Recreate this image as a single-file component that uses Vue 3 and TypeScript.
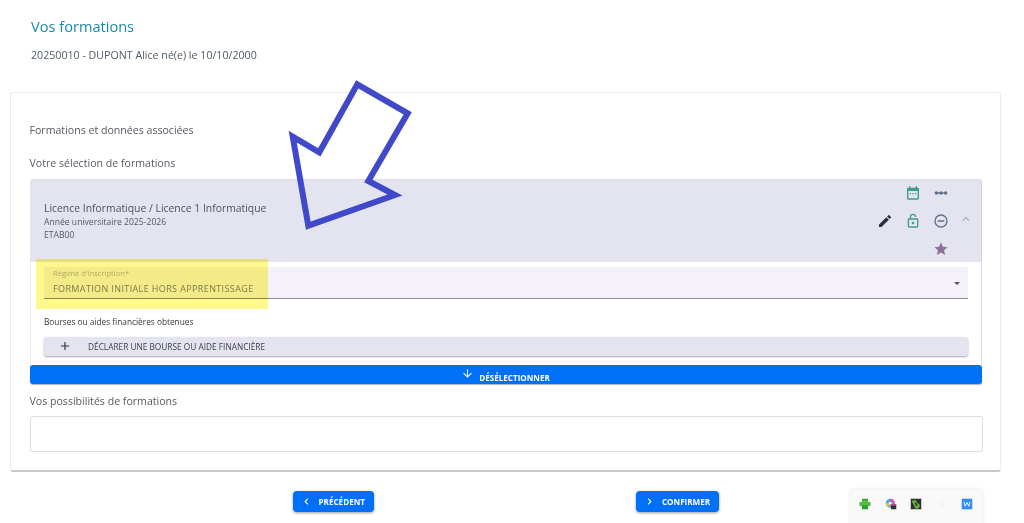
<script setup lang="ts">
const headerText = { title: 'Vos formations', student: '20250010 - DUPONT Alice né(e) le 10/10/2000' }
</script>

<template>
  <div class="page">
    <h1 class="title">{{ headerText.title }}</h1>
    <p class="student">{{ headerText.student }}</p>

    <section class="card">
      <p class="section-first">Formations et données associées</p>
      <p class="section-label">Votre sélection de formations</p>

      <div class="panel">
        <header class="panel-head">
          <div class="panel-info">
            <div class="panel-title">Licence Informatique / Licence 1 Informatique</div>
            <div class="panel-sub">Année universitaire 2025-2026</div>
            <div class="panel-sub">ETAB00</div>
          </div>
          <div class="panel-actions">
            <div class="icon-grid">
              <span></span>
              <svg viewBox="0 0 24 24" class="ic green"><path d="M19 4h-1V2h-2v2H8V2H6v2H5a2 2 0 0 0-2 2v14a2 2 0 0 0 2 2h14a2 2 0 0 0 2-2V6a2 2 0 0 0-2-2zm0 16H5V9h14v11zM7 12h2v2H7zm4 0h2v2h-2zm4 0h2v2h-2z"/></svg>
              <svg viewBox="0 0 24 24" class="ic slate"><circle cx="5" cy="12" r="2.6"/><circle cx="12" cy="12" r="2.6"/><circle cx="19" cy="12" r="2.6"/><rect x="5" y="11" width="14" height="2"/></svg>

              <svg viewBox="0 0 24 24" class="ic dark"><path d="M3 17.25V21h3.75L17.81 9.94l-3.75-3.75L3 17.25zM20.71 7.04a1 1 0 0 0 0-1.41l-2.34-2.34a1 1 0 0 0-1.41 0l-1.83 1.83 3.75 3.75 1.83-1.83z"/></svg>
              <svg viewBox="0 0 24 24" class="ic green"><path d="M12 17a2 2 0 1 0 0-4 2 2 0 0 0 0 4zm6-9h-8.9V6a2.9 2.9 0 0 1 5.8 0h1.9a4.8 4.8 0 0 0-9.6 0v2H6a2 2 0 0 0-2 2v10a2 2 0 0 0 2 2h12a2 2 0 0 0 2-2V10a2 2 0 0 0-2-2zm0 12H6V10h12v10z"/></svg>
              <svg viewBox="0 0 24 24" class="ic slate"><path d="M7 11v2h10v-2H7zm5-9a10 10 0 1 0 0 20 10 10 0 0 0 0-20zm0 18a8 8 0 1 1 0-16 8 8 0 0 1 0 16z"/></svg>

              <span></span>
              <span></span>
              <svg viewBox="0 0 24 24" class="ic mauve"><path d="M12 17.27 18.18 21l-1.64-7.03L22 9.24l-7.19-.61L12 2 9.19 8.63 2 9.24l5.46 4.73L5.82 21z"/></svg>
            </div>
            <svg viewBox="0 0 24 24" class="chevron"><path d="M7.4 15.4 12 10.8l4.6 4.6L18 14l-6-6-6 6z"/></svg>
          </div>
        </header>

        <div class="panel-body">
          <div class="select-field">
            <div class="select-text">
              <div class="select-label">Régime d'inscription*</div>
              <div class="select-value">FORMATION INITIALE HORS APPRENTISSAGE</div>
            </div>
            <span class="caret"></span>
          </div>
          <div class="aid-label">Bourses ou aides financières obtenues</div>
          <button class="aid-btn" type="button">
            <svg viewBox="0 0 24 24" class="plus"><path d="M19 13h-6v6h-2v-6H5v-2h6V5h2v6h6z"/></svg>
            <span>DÉCLARER UNE BOURSE OU AIDE FINANCIÈRE</span>
          </button>
        </div>

        <button class="deselect" type="button">
          <svg viewBox="0 0 24 24" class="down"><path d="m20 12-1.41-1.41L13 16.17V4h-2v12.17l-5.58-5.59L4 12l8 8z"/></svg>
          <span>DÉSÉLECTIONNER</span>
        </button>

        <div class="highlight"></div>
      </div>

      <p class="section-label possibilities">Vos possibilités de formations</p>
      <div class="empty-box"></div>
    </section>

    <footer class="nav">
      <button class="nav-btn" type="button">
        <svg viewBox="0 0 24 24" class="nav-ic"><path d="M15.4 7.4 14 6l-6 6 6 6 1.4-1.4-4.6-4.6z"/></svg>
        <span>PRÉCÉDENT</span>
      </button>
      <button class="nav-btn" type="button">
        <svg viewBox="0 0 24 24" class="nav-ic"><path d="M10 6 8.6 7.4l4.6 4.6-4.6 4.6L10 18l6-6z"/></svg>
        <span>CONFIRMER</span>
      </button>
    </footer>

    <svg class="arrow" viewBox="0 0 1024 523" aria-hidden="true">
      <polygon points="357.3,84.3 407.7,113.3 368.3,181 395,195 308.3,225.7 292.7,136.7 319.3,152.3" />
    </svg>

    <aside class="tray">
      <svg viewBox="0 0 16 16" class="tray-ic"><rect x="4" y="1" width="8" height="4" fill="#3cae2e"/><rect x="0.5" y="5" width="15" height="6" rx="2" fill="#5ab845"/><rect x="4" y="10" width="8" height="5" fill="#1fa52a"/></svg>
      <svg viewBox="0 0 16 16" class="tray-ic"><circle cx="7" cy="7" r="6" fill="#4aa8e8"/><path d="M7 1A6 6 0 0 1 13 7H7z" fill="#e8529a"/><path d="M1 7a6 6 0 0 0 3.5 5.4L7 7z" fill="#f2c230"/><circle cx="7" cy="7" r="1.8" fill="#fff"/><rect x="8" y="9" width="7" height="6" fill="#333"/><rect x="8" y="8" width="7" height="2" fill="#c04a9a"/></svg>
      <svg viewBox="0 0 16 16" class="tray-ic"><rect x="1" y="1" width="14" height="14" fill="#2e3230"/><path d="M3 3h5l1 3 4 3v2l-2 3H7L5 9 3 6z" fill="#6db72c"/><path d="M6 6l3 1 1 3-2 1z" fill="#2e3230"/></svg>
      <svg viewBox="0 0 16 16" class="tray-ic"><circle cx="8" cy="6" r="3" fill="none" stroke="#efefef" stroke-width="1.2"/><path d="M3 13c1-3 9-3 10 0" fill="none" stroke="#efefef" stroke-width="1.2"/></svg>
      <svg viewBox="0 0 16 16" class="tray-ic"><rect x="1" y="1" width="14" height="14" fill="#2f8cf0"/><path d="M4 5l1.6 6L8 6l2.4 5L12 5" fill="none" stroke="#fff" stroke-width="1.2"/></svg>
    </aside>
  </div>
</template>

<style scoped>
.page {
  position: relative;
  width: 1024px;
  height: 523px;
  overflow: hidden;
  box-sizing: border-box;
  padding: 16px 23px 0 10px;
  background: #fff;
  font-family: "Open Sans", sans-serif;
  color: #4a4f55;
}
.title {
  margin: 0 0 0 21px;
  font-size: 14.6px;
  line-height: 20px;
  font-weight: 400;
  color: #1a8ba6;
}
.student {
  margin: 11px 0 0 21px;
  font-size: 10.65px;
  line-height: 16px;
  color: #4f5b66;
}
.card {
  box-sizing: border-box;
  width: 991px;
  height: 380px;
  margin-top: 29px;
  padding: 29px 18px 0 18.5px;
  border: 1px solid #ececec;
  border-bottom: 2px solid #c8c8c8;
  border-radius: 3px;
  background: #fff;
}
.section-first,
.section-label {
  margin: 0;
  font-size: 10.6px;
  line-height: 16px;
  color: #555a60;
}
.section-label { margin-top: 17px; }
.panel {
  position: relative;
  margin-top: 8px;
}
.panel-head {
  box-sizing: border-box;
  height: 83px;
  display: flex;
  align-items: center;
  justify-content: space-between;
  padding: 0 8px 0 14.5px;
  background: #e4e4f0;
  border-top: 1px solid #dcdce6;
  border-right: 1px solid #d5d5de;
  border-radius: 3px 3px 0 0;
}
.panel-info { padding-top: 1px; }
.panel-title {
  font-size: 10.4px;
  line-height: 15px;
  color: #4f5358;
}
.panel-sub {
  font-size: 8.6px;
  line-height: 13.5px;
  color: #55585e;
}
.panel-actions {
  display: flex;
  align-items: center;
  gap: 10px;
}
.icon-grid {
  display: grid;
  grid-template-columns: repeat(3, 16px);
  grid-auto-rows: 16px;
  column-gap: 12px;
  row-gap: 12px;
}
.ic { width: 16px; height: 16px; display: block; }
.green { fill: #3f9f80; }
.slate { fill: #5f7187; }
.dark { fill: #26323f; }
.mauve { fill: #8c7097; }
.chevron { width: 14px; height: 14px; margin-top: -4px; fill: #a4a8b2; }
.panel-body {
  box-sizing: border-box;
  height: 103px;
  padding: 5px 13.5px 0;
  border-right: 1px solid #dcdcdc;
  border-left: 1px solid #ececec;
}
.select-field {
  box-sizing: border-box;
  width: 924px;
  height: 32px;
  display: flex;
  align-items: flex-start;
  justify-content: space-between;
  padding: 1px 8px 0 9px;
  background: #f4f1fa;
  border-bottom: 1px solid #8b8b93;
}
.select-label {
  font-size: 7.6px;
  line-height: 10px;
  color: #b0b0b0;
}
.select-value {
  margin-top: 3.5px;
  font-size: 9px;
  line-height: 13px;
  letter-spacing: 0.38px;
  color: #7e7e86;
}
.caret {
  align-self: center;
  width: 0;
  height: 0;
  border-left: 3px solid transparent;
  border-right: 3px solid transparent;
  border-top: 3px solid #555;
}
.aid-label {
  margin-top: 17px;
  font-size: 8.3px;
  line-height: 12px;
  color: #33373c;
}
.aid-btn {
  box-sizing: border-box;
  width: 924px;
  height: 18.5px;
  margin-top: 9px;
  display: flex;
  align-items: center;
  padding: 0 0 0 14px;
  border: 0;
  border-radius: 3px;
  background: #e4e4f0;
  box-shadow: 0 1px 2px rgba(0, 0, 0, 0.35);
  font-family: inherit;
  font-size: 8.3px;
  color: #3b3f45;
}
.plus { width: 14px; height: 14px; margin-right: 16px; fill: #30343a; }
.deselect {
  box-sizing: border-box;
  width: 952px;
  height: 19px;
  display: flex;
  align-items: center;
  justify-content: center;
  gap: 5px;
  padding: 0;
  border: 0;
  border-radius: 3px;
  background: #0170f9;
  box-shadow: 0 1px 1px rgba(0, 0, 0, 0.3);
  color: #fff;
  font-family: inherit;
  font-size: 8.1px;
  font-weight: 700;
}
.deselect span { padding-top: 5px; }
.down { width: 13px; height: 13px; fill: #fff; margin-top: -2px; }
.highlight {
  position: absolute;
  left: 6.5px;
  top: 80px;
  width: 232px;
  height: 50px;
  background: #fff88a;
  mix-blend-mode: multiply;
  pointer-events: none;
}
.possibilities { margin-top: 9px; }
.empty-box {
  box-sizing: border-box;
  width: 953.5px;
  height: 36px;
  margin-top: 7px;
  border: 1px solid #dedede;
  border-radius: 2px;
}
.nav {
  display: flex;
  margin-top: 19px;
  padding-left: 283px;
  gap: 262.5px;
}
.nav-btn {
  height: 21px;
  display: flex;
  align-items: center;
  gap: 5.5px;
  padding: 0 9px 0 7px;
  border: 0;
  border-radius: 4px;
  background: #0170f9;
  box-shadow: 0 1px 3px rgba(0, 0, 0, 0.4);
  color: #fff;
  font-family: inherit;
  font-size: 8.1px;
  font-weight: 700;
}
.nav-ic { width: 13px; height: 13px; fill: #fff; }
.arrow {
  position: absolute;
  inset: 0;
  width: 1024px;
  height: 523px;
  pointer-events: none;
}
.arrow polygon {
  fill: none;
  stroke: #3f49c9;
  stroke-width: 6;
  stroke-miterlimit: 10;
}
.tray {
  position: absolute;
  left: 850px;
  top: 489px;
  width: 133px;
  height: 40px;
  box-sizing: border-box;
  display: flex;
  justify-content: space-between;
  padding: 9px 10px 0 9px;
  background: #f9f9f9;
  border-radius: 4px;
  box-shadow: 0 0 3px rgba(0, 0, 0, 0.12);
}
.tray-ic { width: 12px; height: 12px; }
</style>
